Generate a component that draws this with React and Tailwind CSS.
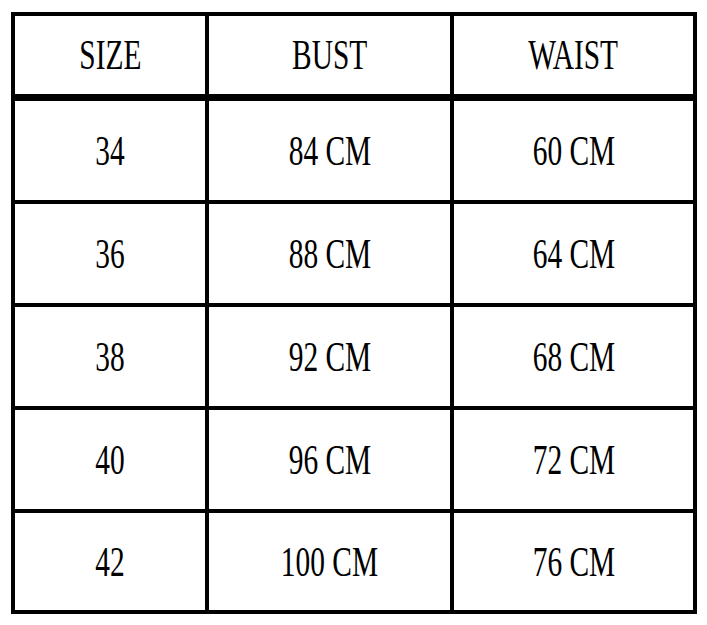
const rows = [
  ['34', '84 CM', '60 CM'],
  ['36', '88 CM', '64 CM'],
  ['38', '92 CM', '68 CM'],
  ['40', '96 CM', '72 CM'],
  ['42', '100 CM', '76 CM'],
];

const Cell = ({ children, className = '' }) => (
  <div className={`flex items-center justify-center ${className}`}>
    <span className="inline-block scale-x-[0.7] whitespace-nowrap">{children}</span>
  </div>
);

const Row = ({ cells, className = '' }) => (
  <div className={`flex ${className}`}>
    <Cell className="w-[190px]">{cells[0]}</Cell>
    <Cell className="w-[245px] border-l-4 border-black">{cells[1]}</Cell>
    <Cell className="flex-1 border-l-4 border-black">{cells[2]}</Cell>
  </div>
);

export default function App() {
  return (
    <div className="w-[707px] h-[625px] bg-white pt-[12px] pl-[11px] text-black text-[42px] leading-none font-['Liberation_Serif',serif]">
      <div className="w-[686px] border-4 border-black">
        <Row cells={['SIZE', 'BUST', 'WAIST']} className="h-[85px] border-b-[7px] border-black" />
        {rows.map((r, i) => (
          <Row
            key={r[0]}
            cells={r}
            className={i < rows.length - 1 ? 'h-[103px] border-b-4 border-black' : 'h-[97px]'}
          />
        ))}
      </div>
    </div>
  );
}
